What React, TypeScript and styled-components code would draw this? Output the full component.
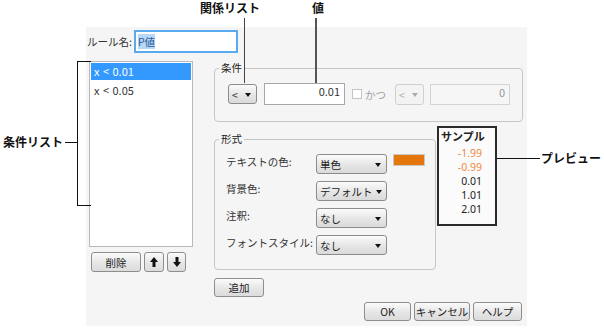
import styled, { createGlobalStyle } from "styled-components";

const GlobalStyle = createGlobalStyle`
  html, body {
    margin: 0;
    padding: 0;
    background: #ffffff;
  }
  body {
    font-family: "Noto Sans CJK JP", "Noto Sans", sans-serif;
    font-size: 10.5px;
    color: #222;
    white-space: nowrap;
  }
`;

const Page = styled.div`
  position: relative;
  width: 604px;
  height: 328px;
  overflow: hidden;
  box-sizing: border-box;
  padding: 27px 0 0 86px;
`;

const Dialog = styled.div`
  width: 441px;
  height: 299px;
  box-sizing: border-box;
  background: #f5f5f5;
  display: flex;
  flex-direction: column;
  padding: 3px 5px 5px 0;
`;

const NameRow = styled.div`
  display: flex;
  align-items: center;
  gap: 2px;
  height: 23px;
`;

const Label = styled.span`
  padding-left: 1px;
  color: #333;
`;

const NameInput = styled.div`
  width: 104px;
  height: 23px;
  box-sizing: border-box;
  border: 2px solid #5aaaf0;
  background: #fff;
  padding: 2px 2px;
  line-height: 15px;
`;

const Selected = styled.span`
  background: #b8d8f8;
  color: #2a5a9a;
`;

const Main = styled.div`
  display: flex;
  margin-top: 8px;
`;

const LeftCol = styled.div`
  margin-left: 3px;
  width: 104px;
  display: flex;
  flex-direction: column;
`;

const ListBox = styled.div`
  height: 186px;
  box-sizing: border-box;
  border: 1px solid #b9b9b9;
  background: #fff;
  padding: 1px;
`;

const ListItem = styled.div<{ $selected?: boolean }>`
  height: 17px;
  line-height: 17px;
  margin-bottom: 2px;
  padding-left: 3px;
  font-size: 11px;
  background: ${(p) => (p.$selected ? "#3399ff" : "transparent")};
  color: ${(p) => (p.$selected ? "#fff" : "#333")};
  word-spacing: 1px;
`;

const ListButtons = styled.div`
  display: flex;
  gap: 3px;
  margin: 5px 0 0 2px;
`;

const Button = styled.button<{ $w: number; $h?: number }>`
  width: ${(p) => p.$w}px;
  height: ${(p) => p.$h ?? 19}px;
  box-sizing: border-box;
  padding: 0;
  border: 1px solid #8e8e8e;
  border-radius: 3px;
  background: linear-gradient(#fbfbfb, #e6e6e6 55%, #dcdcdc);
  font-family: inherit;
  font-size: 10.5px;
  color: #222;
  white-space: nowrap;
  display: flex;
  align-items: center;
  justify-content: center;
`;

const RightCol = styled.div`
  margin-left: 21px;
  width: 308px;
  display: flex;
  flex-direction: column;
`;

const Group = styled.fieldset<{ $pad: string; $w?: number }>`
  margin: 0;
  ${(p) => (p.$w ? `width: ${p.$w}px;` : "")}
  box-sizing: border-box;
  border: 1px solid #c6c6c6;
  border-radius: 4px;
  padding: ${(p) => p.$pad};
`;

const Legend = styled.legend<{ $shift: number }>`
  padding: 0 2px;
  margin-left: ${(p) => p.$shift}px;
  height: 14px;
  line-height: 14px;
  color: #222;
`;

const ConditionRow = styled.div`
  display: flex;
  align-items: center;
`;

const Select = styled.div<{ $w: number; $h?: number; $disabled?: boolean }>`
  width: ${(p) => p.$w}px;
  height: ${(p) => p.$h ?? 20}px;
  box-sizing: border-box;
  border: 1px solid ${(p) => (p.$disabled ? "#cfcfcf" : "#8c8c8c")};
  border-radius: 3px;
  background: ${(p) =>
    p.$disabled ? "#f3f3f3" : "linear-gradient(#fbfbfb, #e4e4e4 60%, #dadada)"};
  color: ${(p) => (p.$disabled ? "#aaa" : "#222")};
  display: flex;
  align-items: center;
  justify-content: space-between;
  padding: 1px 5px 0 3px;
`;

const Caret = styled.span<{ $disabled?: boolean }>`
  flex: none;
  width: 0;
  height: 0;
  border-left: 3px solid transparent;
  border-right: 3px solid transparent;
  border-top: 4px solid ${(p) => (p.$disabled ? "#aaa" : "#111")};
  margin-left: 3px;
`;

const ValueBox = styled.div<{ $w: number; $h: number; $gap: number; $disabled?: boolean }>`
  width: ${(p) => p.$w}px;
  height: ${(p) => p.$h}px;
  margin-left: ${(p) => p.$gap}px;
  box-sizing: border-box;
  border: 1px solid ${(p) => (p.$disabled ? "#d4d4d4" : "#a8a8a8")};
  background: ${(p) => (p.$disabled ? "#f6f6f6" : "#fff")};
  color: ${(p) => (p.$disabled ? "#999" : "#333")};
  text-align: right;
  padding: 0 4px;
  line-height: 15px;
  font-size: 11px;
`;

const Check = styled.span`
  width: 10px;
  height: 10px;
  box-sizing: border-box;
  border: 1px solid #c4c4c4;
  background: #fff;
  margin: 0 3px 0 7px;
`;

const Dim = styled.span`
  color: #a0a0a0;
  margin-right: 9px;
`;

const FormatRow = styled.div`
  display: flex;
  align-items: flex-start;
  margin-top: 4px;
`;

const FormatGrid = styled.div`
  display: grid;
  grid-template-columns: 90px 71px auto;
  grid-auto-rows: 20px;
  row-gap: 7px;
`;

const FieldLabel = styled.span`
  color: #333;
  line-height: 15px;
`;

const Swatch = styled.div<{ $color: string }>`
  width: 32px;
  height: 12px;
  margin-left: 6px;
  background: ${(p) => p.$color};
  border: 1px solid #c9c9c9;
  box-sizing: border-box;
`;

const Preview = styled.div`
  margin-left: 1px;
  width: 60px;
  height: 100px;
  box-sizing: border-box;
  border: 2px solid #2a2a2a;
  background: #fbfbfb;
  padding: 1px 0 0 2px;
  display: flex;
  flex-direction: column;
`;

const PreviewTitle = styled.div`
  font-weight: bold;
  font-size: 11px;
  color: #222;
  line-height: 15px;
  margin-bottom: 2px;
`;

const PreviewValue = styled.div<{ $color: string }>`
  text-align: right;
  padding-right: 13px;
  font-family: "Noto Sans", sans-serif;
  font-size: 10.5px;
  color: ${(p) => p.$color};
  line-height: 14px;
`;

const Footer = styled.div`
  margin-top: auto;
  display: flex;
  justify-content: flex-end;
  gap: 3px;
`;

const Callout = styled.div<{ $x: number; $y: number }>`
  position: absolute;
  left: ${(p) => p.$x}px;
  top: ${(p) => p.$y}px;
  font-size: 12px;
  font-weight: bold;
  color: #111;
  line-height: 14px;
`;

const Leader = styled.div<{ $x: number; $y: number; $w: number; $h: number; $c?: string }>`
  position: absolute;
  left: ${(p) => p.$x}px;
  top: ${(p) => p.$y}px;
  width: ${(p) => p.$w}px;
  height: ${(p) => p.$h}px;
  background: ${(p) => p.$c ?? "#111"};
`;

const Bracket = styled.div`
  position: absolute;
  left: 77px;
  top: 61px;
  width: 14px;
  height: 145px;
  box-sizing: border-box;
  border: 1px solid #111;
  border-right: none;
`;

const Arrow = ({ down }: { down?: boolean }) => (
  <svg width="8" height="10" viewBox="0 0 8 10" style={down ? { transform: "rotate(180deg)" } : undefined}>
    <path d="M4 0 L8 5 L5.5 5 L5.5 10 L2.5 10 L2.5 5 L0 5 Z" fill="#111" />
  </svg>
);

const formatRows: [string, string, string | null][] = [
  ["テキストの色:", "単色", "#e4760b"],
  ["背景色:", "デフォルト", null],
  ["注釈:", "なし", null],
  ["フォントスタイル:", "なし", null],
];

const samples: [string, string][] = [
  ["-1.99", "#f08a3c"],
  ["-0.99", "#f08a3c"],
  ["0.01", "#222"],
  ["1.01", "#222"],
  ["2.01", "#222"],
];

export default function App() {
  return (
    <Page>
      <GlobalStyle />
      <Dialog>
        <NameRow>
          <Label>ルール名:</Label>
          <NameInput>
            <Selected>P値</Selected>
          </NameInput>
        </NameRow>
        <Main>
          <LeftCol>
            <ListBox>
              <ListItem $selected>x &lt; 0.01</ListItem>
              <ListItem>x &lt; 0.05</ListItem>
            </ListBox>
            <ListButtons>
              <Button $w={50} $h={20}>削除</Button>
              <Button $w={20} $h={20}><Arrow /></Button>
              <Button $w={19} $h={20}><Arrow down /></Button>
            </ListButtons>
          </LeftCol>
          <RightCol>
            <Group $pad="8px 12px 16px 13px">
              <Legend $shift={-9}>条件</Legend>
              <ConditionRow>
                <Select $w={29}>&lt;<Caret /></Select>
                <ValueBox $w={81} $h={22} $gap={7}>0.01</ValueBox>
                <Check />
                <Dim>かつ</Dim>
                <Select $w={29} $h={21} $disabled>&lt;<Caret $disabled /></Select>
                <ValueBox $w={80} $h={21} $gap={6} $disabled>0</ValueBox>
              </ConditionRow>
            </Group>
            <FormatRow>
              <Group $pad="8px 8px 14px 11px" $w={222} style={{ marginTop: 6 }}>
                <Legend $shift={-7}>形式</Legend>
                <FormatGrid>
                  {formatRows.map(([label, value, color]) => [
                    <FieldLabel key={label + "l"}>{label}</FieldLabel>,
                    <Select key={label + "s"} $w={71}>{value}<Caret /></Select>,
                    color ? <Swatch key={label + "c"} $color={color} /> : <span key={label + "c"} />,
                  ])}
                </FormatGrid>
              </Group>
              <Preview>
                <PreviewTitle>サンプル</PreviewTitle>
                {samples.map(([v, c]) => (
                  <PreviewValue key={v} $color={c}>{v}</PreviewValue>
                ))}
              </Preview>
            </FormatRow>
            <Button $w={50} style={{ marginTop: 8 }}>追加</Button>
          </RightCol>
        </Main>
        <Footer>
          <Button $w={47}>OK</Button>
          <Button $w={56}>キャンセル</Button>
          <Button $w={49}>ヘルプ</Button>
        </Footer>
      </Dialog>

      <Callout $x={200} $y={1}>関係リスト</Callout>
      <Leader $x={244} $y={18} $w={1} $h={65} $c="#444" />
      <Callout $x={312} $y={1}>値</Callout>
      <Leader $x={315} $y={18} $w={2} $h={65} $c="#555" />
      <Callout $x={3} $y={135}>条件リスト</Callout>
      <Leader $x={65} $y={142} $w={12} $h={1} />
      <Bracket />
      <Callout $x={541} $y={151}>プレビュー</Callout>
      <Leader $x={497} $y={158} $w={43} $h={1} />
    </Page>
  );
}
